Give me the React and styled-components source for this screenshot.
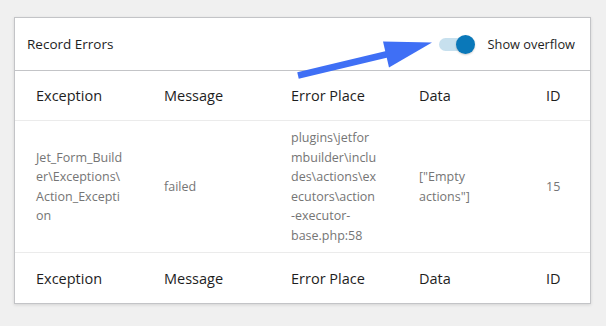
import React from "react";
import styled, { createGlobalStyle } from "styled-components";

const Global = createGlobalStyle`
  html, body { margin: 0; padding: 0; background: #f0f0f0; }
  body { font-family: "Open Sans", "Noto Sans", sans-serif; }
  * { box-sizing: border-box; }
`;

const Page = styled.div`
  position: relative;
  width: 606px;
  height: 326px;
  padding: 17px 15px 0 14px;
`;

const Card = styled.section`
  width: 577px;
  background: #fff;
  border: 1px solid #c3c4c7;
  box-shadow: 0 1px 3px rgba(0, 0, 0, 0.12);
`;

const CardHeader = styled.header`
  height: 53px;
  display: flex;
  align-items: center;
  justify-content: space-between;
  padding: 0 15px 0 12px;
  border-bottom: 1px solid #c3c4c7;
`;

const Title = styled.h2`
  margin: 0;
  font-size: 13.5px;
  font-weight: 400;
  color: #1e1e1e;
`;

const ToggleWrap = styled.label`
  display: flex;
  align-items: center;
  gap: 13px;
  font-size: 12.8px;
  color: #1e1e1e;
`;

const Switch = styled.span`
  position: relative;
  width: 36px;
  height: 19px;
  display: inline-block;
`;

const Track = styled.span`
  position: absolute;
  left: 0;
  top: 3px;
  width: 32px;
  height: 13px;
  border-radius: 7px;
  background: #c7e0ee;
`;

const Knob = styled.span`
  position: absolute;
  right: 0;
  top: 0;
  width: 19px;
  height: 19px;
  border-radius: 50%;
  background: #0a78b9;
  box-shadow: 0 1px 2px rgba(0, 0, 0, 0.2);
`;

const Row = styled.div`
  display: grid;
  grid-template-columns: 128px 127px 128px 127px 1fr;
  align-items: center;
  min-height: ${(p) => p.$h}px;
  border-bottom: ${(p) => (p.$last ? "none" : "1px solid #ebebeb")};
`;

const HeadCell = styled.div`
  padding: 0 20px 0 21px;
  font-size: 14.5px;
  color: #1e1e1e;
  font-weight: 400;
`;

const DataCell = styled.div`
  padding: 7px 20px 7px 21px;
  font-size: 12.5px;
  line-height: 19.5px;
  color: #757575;
  overflow-wrap: anywhere;
`;

const Arrow = styled.svg`
  position: absolute;
  left: 0;
  top: 0;
  pointer-events: none;
`;

const cols = ["Exception", "Message", "Error Place", "Data", "ID"];
const data = [
  "Jet_Form_Builder\\Exceptions\\Action_Exception",
  "failed",
  "plugins\\jetformbuilder\\includes\\actions\\executors\\action-executor-base.php:58",
  '["Empty actions"]',
  "15",
];

export default function App() {
  return (
    <Page>
      <Global />
      <Card>
        <CardHeader>
          <Title>Record Errors</Title>
          <ToggleWrap>
            <Switch>
              <Track />
              <Knob />
            </Switch>
            Show overflow
          </ToggleWrap>
        </CardHeader>
        <Row $h={50}>
          {cols.map((c) => (
            <HeadCell key={c}>{c}</HeadCell>
          ))}
        </Row>
        <Row $h={132}>
          {data.map((d, i) => (
            <DataCell key={i}>{d}</DataCell>
          ))}
        </Row>
        <Row $h={50} $last>
          {cols.map((c) => (
            <HeadCell key={c}>{c}</HeadCell>
          ))}
        </Row>
      </Card>
      <Arrow width="606" height="326" viewBox="0 0 606 326">
        <line x1="298" y1="75.5" x2="388" y2="54" stroke="#3f6ff5" strokeWidth="6.5" />
        <polygon points="383,41.5 432,42.5 389,67.5" fill="#3f6ff5" />
      </Arrow>
    </Page>
  );
}
